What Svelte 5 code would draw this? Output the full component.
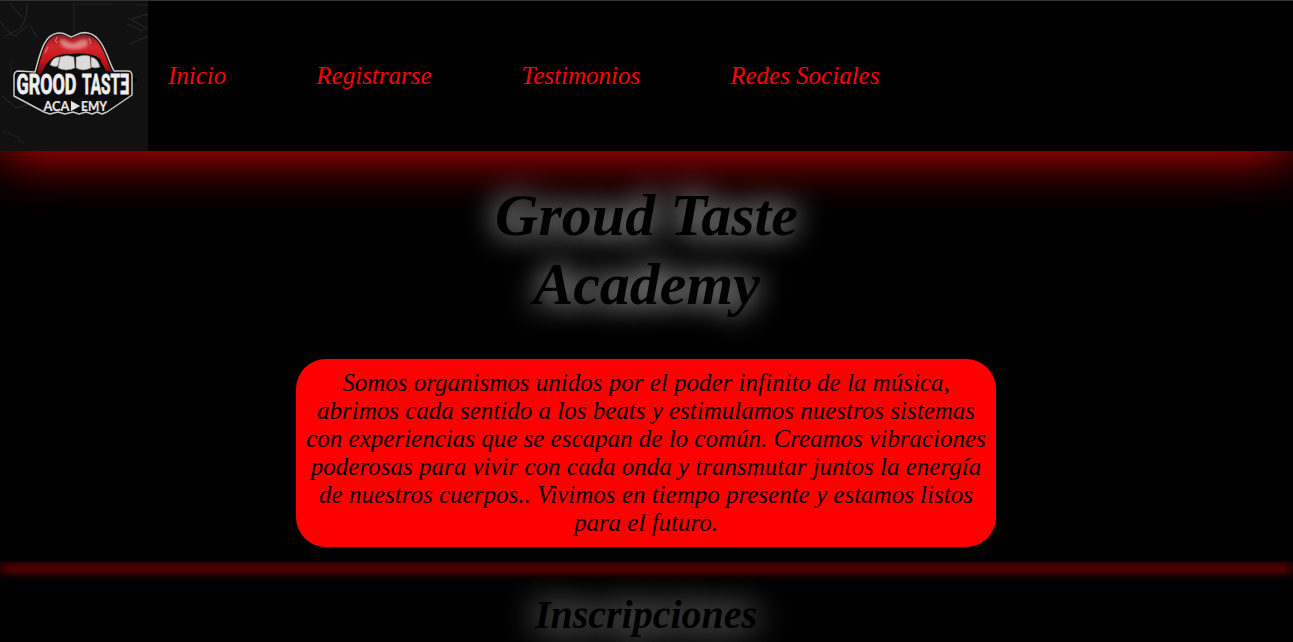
<script>
  const links = ['Inicio', 'Registrarse', 'Testimonios', 'Redes Sociales'];
</script>

<header>
  <svg class="logo" width="148" height="150" viewBox="0 0 148 150" role="img" aria-label="Grood Taste Academy">
    <defs>
      <linearGradient id="lip" x1="0" y1="0" x2="0" y2="1">
        <stop offset="0" stop-color="#8e1a20" />
        <stop offset=".3" stop-color="#d3262c" />
        <stop offset=".7" stop-color="#c0141b" />
        <stop offset="1" stop-color="#6a0a0e" />
      </linearGradient>
      <filter id="soft" x="-30%" y="-30%" width="160%" height="160%"><feGaussianBlur stdDeviation="1.6" /></filter>
      <filter id="fine"><feGaussianBlur stdDeviation=".6" /></filter>
    </defs>
    <rect width="148" height="150" fill="#111" />
    <g fill="none" stroke="#2e2e2e" stroke-width=".9" filter="url(#fine)">
      <path d="M27 3Q28 15 21 27L5 35M30 24L37 36M10 3L22 16M0 20Q9 33 15 35L28 24M128 17L148 28M127 23L143 30M148 13L132 18M148 35L130 43M2 95L16 107L30 103M18 139L24 142" />
      <path stroke="#232323" d="M74 3V32M74 3H112M136 4H148M11 60V72M2 130L20 137" />
    </g>
    <path d="M35 71C40 54 43 34 58 32C65 31 67 35 71 36C76 35 79 30 88 32C103 35 107 57 114 70H128Q132 70 132 75V94L107 111L102 113L97 111L92 113L86 111L79 113L73 111L65 113L58 111L50 113L44 111L14 95V75Q14 70 19 70Z" fill="#0b0b0b" stroke="#c9c9c9" stroke-width="1.5" stroke-linejoin="round" />
    <path d="M37 73C41 55 46 36 57 34C64 32 67 37 71 37C76 37 79 32 87 34C101 36 106 58 112 71L104 69C101 56 93 53 77 54C65 52 54 54 49 62L41 73Z" fill="url(#lip)" />
    <path d="M59 40Q64 36 68 41Q74 44 80 39L86 38Q90 42 86 46Q74 51 63 46Z" fill="#e9b0ae" opacity=".65" filter="url(#soft)" />
    <path d="M44 68Q50 52 71 53Q92 51 100 58L107 72H42Z" fill="#090707" filter="url(#fine)" />
    <path d="M50 64Q53 55 60 56L58 65Q55 67 50 64ZM60 56Q67 53 74 56L75 67Q66 71 58 67ZM76 56Q84 53 90 55L91 67Q83 71 76 67ZM91 56Q98 57 100 66Q95 68 91 66Z" fill="#dddbda" stroke="#666" stroke-width=".5" />
    <path d="M57 36Q54 40 57 42M89 37L91 43M48 46L45 52" fill="none" stroke="#ffc1bd" stroke-width="1" opacity=".6" />
    <g class="brand">
      <text x="16.5" y="93" font-size="28" textLength="60" lengthAdjust="spacingAndGlyphs">GROOD</text>
      <text x="82" y="93" font-size="28" textLength="38" lengthAdjust="spacingAndGlyphs">TAST</text>
      <text transform="translate(129.5 93) scale(-.58 1)" x="0" y="0" font-size="28">E</text>
    </g>
    <g class="academy">
      <text x="43.5" y="110" font-size="14" textLength="26" lengthAdjust="spacingAndGlyphs">ACA</text>
      <path d="M71 100L80 105L71 110Z" />
      <text x="81" y="110" font-size="14" textLength="26" lengthAdjust="spacingAndGlyphs">EMY</text>
    </g>
    <circle cx="135" cy="79" r="2.2" fill="#050505" />
  </svg>
  <nav>
    {#each links as link}<a href="#{link}">{link}</a>{/each}
  </nav>
</header>

<main>
  <h1>Groud Taste Academy</h1>
  <p>Somos organismos unidos por el poder infinito de la música, abrimos cada sentido a los beats y estimulamos nuestros sistemas con experiencias que se escapan de lo común. Creamos vibraciones poderosas para vivir con cada onda y transmutar juntos la energía de nuestros cuerpos.. Vivimos en tiempo presente y estamos listos para el futuro.</p>
</main>

<section>
  <div class="glow"></div>
  <h2>Inscripciones</h2>
</section>

<style>
  :global(body) {
    background: #000;
    overflow: hidden;
    font-family: "Liberation Serif", "Times New Roman", serif;
    font-style: italic;
  }
  header {
    box-sizing: border-box;
    height: 151px;
    display: flex;
    border-top: 1px solid #333;
    background: #000;
    box-shadow: 0 0 60px red;
  }
  .logo { display: block; flex: none; }
  .brand { font-family: Roboto, sans-serif; font-weight: 700; font-style: normal; fill: #eee; stroke: #eee; stroke-width: .8px; }
  .academy { font-family: Lato, sans-serif; font-weight: 700; font-style: normal; fill: #e5e5e5; stroke: #e5e5e5; stroke-width: .2px; }
  nav {
    display: flex;
    align-items: center;
    gap: 90px;
    padding-left: 20px;
  }
  a { color: red; font-size: 25px; line-height: 28px; text-decoration: none; }
  main {
    height: 410px;
    box-sizing: border-box;
    padding-top: 30px;
    display: flex;
    flex-direction: column;
    align-items: center;
  }
  h1 {
    width: 400px;
    margin: 0 0 40px;
    font-size: 60px;
    line-height: 69px;
    text-align: center;
    color: #000;
    text-shadow: 0 0 30px #fff;
  }
  p {
    box-sizing: border-box;
    width: 700px;
    margin: 0 1px 0 0;
    padding: 10px;
    border-radius: 30px;
    background: red;
    color: #000;
    font-size: 25px;
    line-height: 28px;
    text-align: center;
  }
  section { height: 81px; }
  .glow {
    height: 20px;
    margin-bottom: 11px;
    background: linear-gradient(#180000, #400000 4px, #500000 8px, #400000 11px, #180000 15px, transparent 20px);
    mask-image: linear-gradient(90deg, rgb(0 0 0 / .5), #000 10px, #000 calc(100% - 10px), rgb(0 0 0 / .5));
  }
  h2 {
    margin: 0;
    padding-right: 1px;
    font-size: 40px;
    line-height: 46px;
    text-align: center;
    color: #000;
    text-shadow: 0 0 36px #fff;
  }
</style>
